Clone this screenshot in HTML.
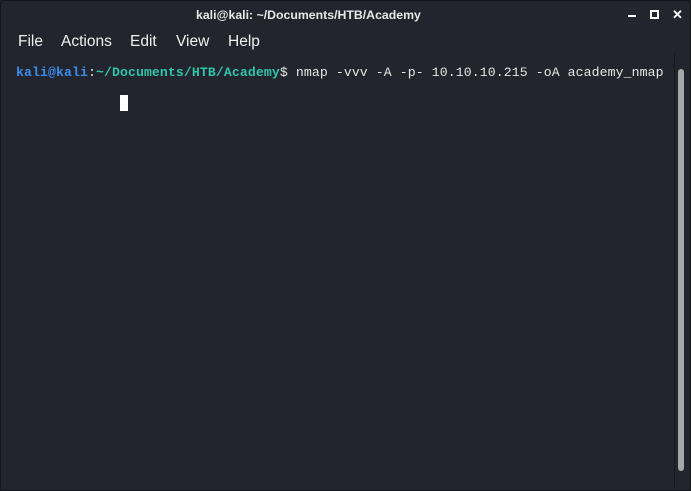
<!DOCTYPE html>
<html><head><style>
body{margin:0;width:691px;height:491px;background:#1b1d24;overflow:hidden;font-family:"Liberation Sans",sans-serif;}
.win{position:absolute;left:0;top:0;width:689px;height:489px;background:#23252e;border:1px solid #14151a;border-radius:4px 4px 0 0;}
.title{position:absolute;top:0;left:195px;height:28px;color:#e8e8e8;font-size:12.3px;font-weight:bold;line-height:28px;white-space:nowrap;}
.ctl{position:absolute;top:0;color:#fff;font-size:13px;line-height:28px;font-weight:bold}
.menu span{position:absolute;top:32px;color:#f0f0f0;font-size:15.5px;}
.term{position:absolute;left:15px;top:62px;font-family:"Liberation Mono",monospace;font-size:13.17px;letter-spacing:0.1px;color:#e6e6e6;white-space:pre;line-height:19px}
.u{color:#3b8eea;font-weight:bold}.p{color:#2fc6a5;font-weight:bold}
.cur{position:absolute;left:119px;top:94px;width:8px;height:16px;background:#fff}
.sl{position:absolute;left:673px;top:52px;width:1px;height:436px;background:#16171c}
.th{position:absolute;left:677px;top:68px;width:6px;height:402px;background:#a8a8a8;border-radius:3px}
</style></head><body><div class="win">
<div class="title">kali@kali: ~/Documents/HTB/Academy</div>
<div style="position:absolute;left:627px;top:14px;width:8px;height:2px;background:#fff"></div>
<div style="position:absolute;left:649px;top:9px;width:5px;height:5px;border:2px solid #fff"></div>
<div class="ctl" style="left:671px">✕</div>
<div class="menu"><span style="left:17px">File</span><span style="left:60px">Actions</span><span style="left:129px">Edit</span><span style="left:175px">View</span><span style="left:227px">Help</span></div>
<div class="term"><span class="u">kali@kali</span>:<span class="p">~/Documents/HTB/Academy</span>$ nmap -vvv -A -p- 10.10.10.215 -oA academy_nmap</div>
<div class="cur"></div>
<div class="sl"></div><div class="th"></div>
</div></body></html>
